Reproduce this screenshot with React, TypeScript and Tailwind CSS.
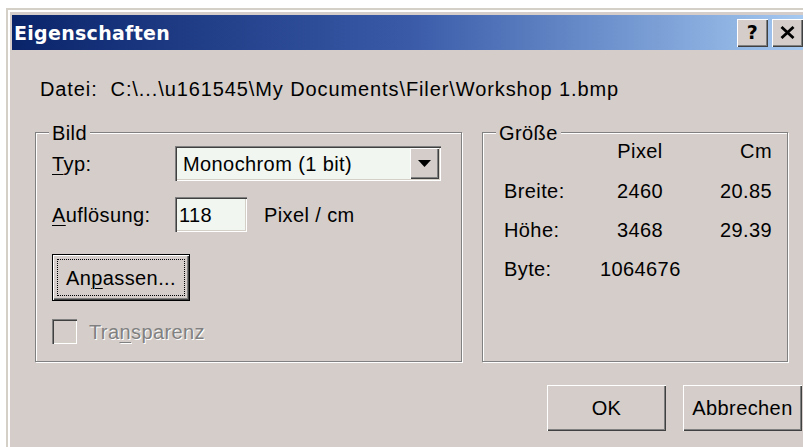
import type { ReactNode } from "react";

const face = "bg-[#d4cdc9]";
const raised =
  "bg-[#d4cdc9] shadow-[inset_1px_1px_0_#fff,inset_-1px_-1px_0_#404040,inset_-2px_-2px_0_#808080]";
const sunken =
  "shadow-[inset_1px_1px_0_#808080,inset_2px_2px_0_#404040,inset_-1px_-1px_0_#fff,inset_-2px_-2px_0_#d4d0c8]";
const etched = "border border-[#808080] shadow-[inset_1px_1px_0_#fff,1px_1px_0_#fff]";

function Key({ children }: { children: ReactNode }) {
  return <span className="underline decoration-1 underline-offset-[3px]">{children}</span>;
}

function GroupBox({
  title,
  className,
  children,
}: {
  title: string;
  className: string;
  children: ReactNode;
}) {
  return (
    <div className={`relative ${etched} ${className}`}>
      <span className={`absolute -top-[12px] left-[13px] px-[3px] leading-[24px] ${face}`}>
        {title}
      </span>
      {children}
    </div>
  );
}

function TitleButton({ children }: { children: ReactNode }) {
  return (
    <div className={`flex h-[28px] w-[31px] items-center justify-center ${raised}`}>
      {children}
    </div>
  );
}

const sizes = [
  { label: "Breite:", px: "2460", cm: "20.85" },
  { label: "Höhe:", px: "3468", cm: "29.39" },
  { label: "Byte:", px: "1064676", cm: "" },
];

export default function App() {
  return (
    <div className="h-[447px] w-[803px] overflow-hidden bg-white pl-[6px] pt-[8px] font-['Liberation_Sans',Arial,sans-serif] text-[20px] leading-[24px] tracking-[0.4px] text-black">
      <div className="h-[460px] w-[812px] border-l-2 border-t-2 border-[#d4d0c8]">
        <div className={`h-full border-l-2 border-t-2 border-white p-[2px] ${face}`}>
          {/* caption */}
          <div className="mt-[1px] flex h-[35px] w-[794px] items-center justify-between bg-linear-to-r from-[#0a246a] via-[#3a5aa8] to-[#a6caf0] pl-[2px] pr-[3px]">
            <span className="font-['DejaVu_Sans',sans-serif] text-[19px] font-bold tracking-[0.3px] text-white">
              Eigenschaften
            </span>
            <div className="flex gap-[4px]">
              <TitleButton>
                <span className="font-['DejaVu_Sans',sans-serif] text-[19px] font-bold leading-none">
                  ?
                </span>
              </TitleButton>
              <TitleButton>
                <svg width="15" height="13" viewBox="0 0 15 13">
                  <path d="M1.5 1 L13.5 12 M13.5 1 L1.5 12" stroke="#000" strokeWidth="2.8" />
                </svg>
              </TitleButton>
            </div>
          </div>

          <div className="w-[794px] pl-[23px]">
            <div className="ml-[5px] mt-[27px] whitespace-pre tracking-[0.9px]">
              Datei:  C:\...\u161545\My Documents\Filer\Workshop 1.bmp
            </div>

            <div className="mt-[31px] flex gap-[20px]">
              <GroupBox title="Bild" className="h-[230px] w-[427px] pl-[16px] pt-[13px]">
                <div className="flex h-[35px] items-center">
                  <span className="w-[123px]">
                    <Key>T</Key>yp:
                  </span>
                  <div
                    className={`flex h-[35px] w-[266px] items-center justify-between bg-[#f1f6f1] pl-[8px] pr-[2px] ${sunken}`}
                  >
                    <span>Monochrom (1 bit)</span>
                    <div className={`flex h-[31px] w-[29px] items-center justify-center ${raised}`}>
                      <svg width="13" height="7" viewBox="0 0 13 7">
                        <path d="M0 0 H13 L6.5 7 Z" fill="#000" />
                      </svg>
                    </div>
                  </div>
                </div>

                <div className="mt-[16px] flex h-[35px] items-center">
                  <span className="w-[123px]">
                    <Key>A</Key>uflösung:
                  </span>
                  <div
                    className={`flex h-[35px] w-[72px] items-center bg-[#f1f6f1] pl-[4px] ${sunken}`}
                  >
                    118
                  </div>
                  <span className="ml-[17px]">Pixel / cm</span>
                </div>

                <div className="mt-[22px] h-[47px] w-[138px] border border-black">
                  <div className={`h-full w-full p-[4px] ${raised}`}>
                    <div className="flex h-full w-full items-center justify-center border border-dotted border-black">
                      An<Key>p</Key>assen...
                    </div>
                  </div>
                </div>

                <div className="mt-[18px] flex items-center">
                  <div className={`h-[25px] w-[25px] ${face} ${sunken}`} />
                  <span className="ml-[12px] text-[#808080] [text-shadow:1px_1px_0_#fff]">
                    Tra<Key>n</Key>sparenz
                  </span>
                </div>
              </GroupBox>

              <GroupBox title="Größe" className="h-[230px] w-[306px] pl-[21px] pt-[6px]">
                <div className="grid grid-cols-[96px_80px_92px]">
                  <span className="h-[40px]" />
                  <span className="h-[40px] text-center">Pixel</span>
                  <span className="h-[40px] text-right">Cm</span>
                  {sizes.map((row) => (
                    <div key={row.label} className="contents">
                      <span className="h-[39px]">{row.label}</span>
                      <span className="h-[39px] text-center">{row.px}</span>
                      <span className="h-[39px] text-right">{row.cm}</span>
                    </div>
                  ))}
                </div>
              </GroupBox>
            </div>

            <div className="mt-[23px] flex justify-end gap-[17px] pr-[4px]">
              <div className={`flex h-[46px] w-[119px] items-center justify-center ${raised}`}>
                OK
              </div>
              <div className={`flex h-[46px] w-[119px] items-center justify-center ${raised}`}>
                Abbrechen
              </div>
            </div>
          </div>
        </div>
      </div>
    </div>
  );
}
